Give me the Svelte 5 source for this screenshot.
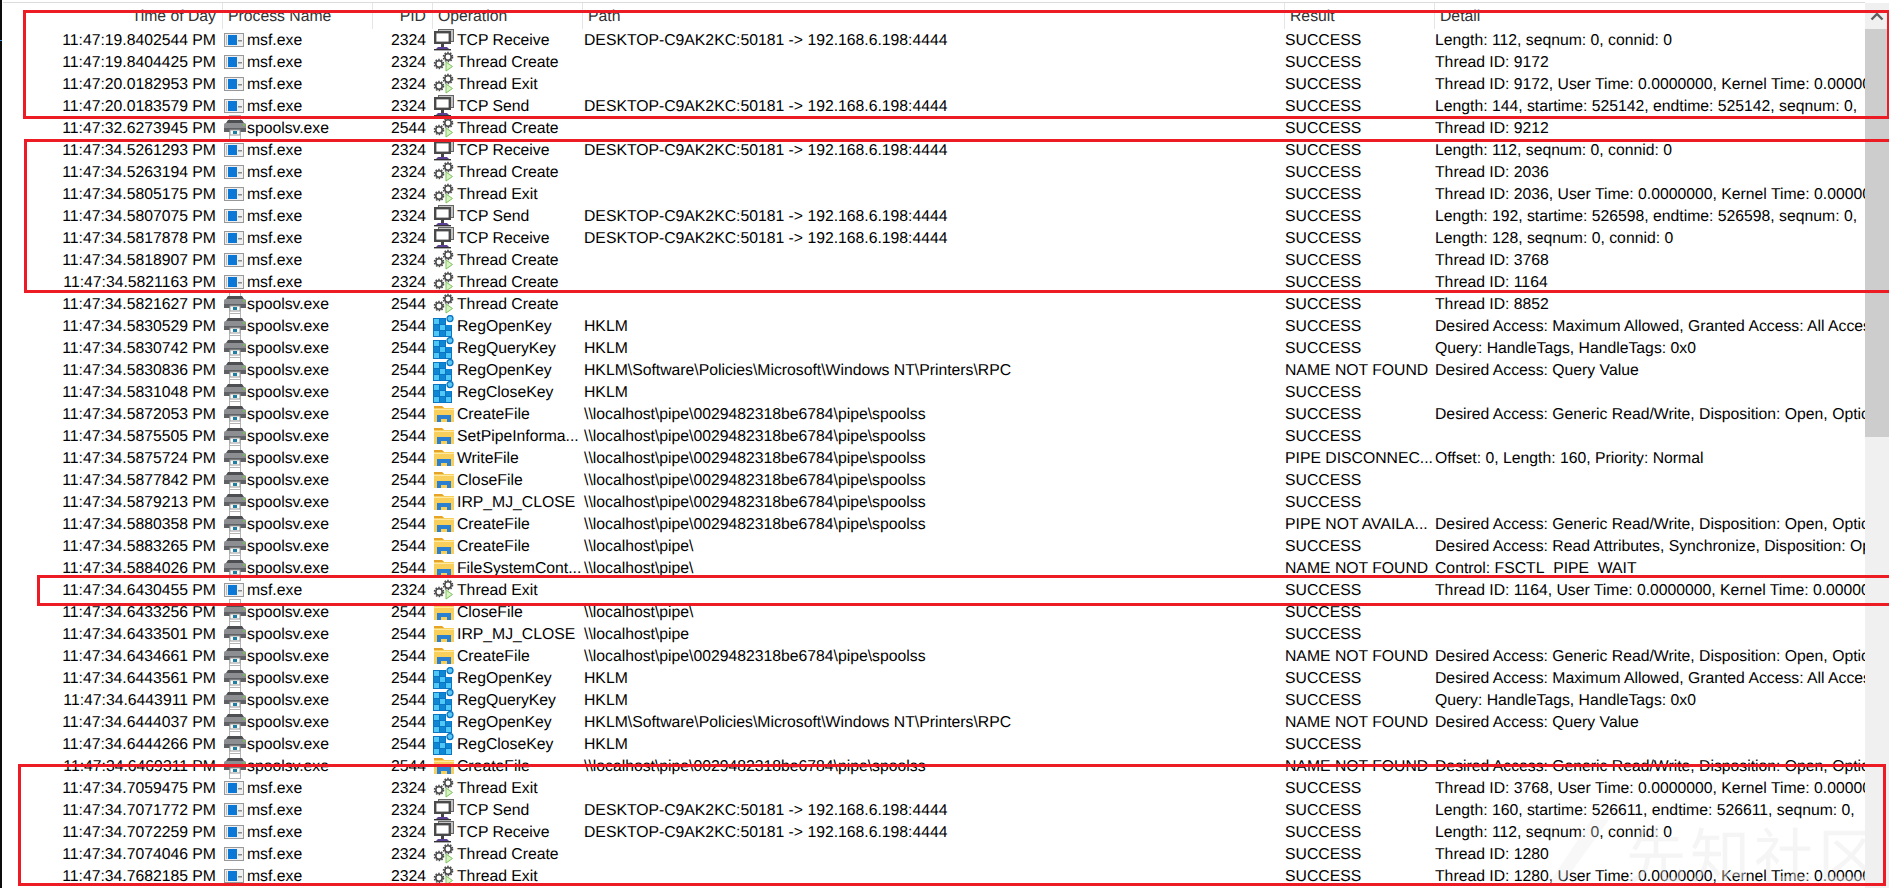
<script>
  const columns = [
    { label: 'Time of Day', cls: 'time' },
    { label: 'Process Name', cls: 'proc' },
    { label: 'PID', cls: 'pid' },
    { label: 'Operation', cls: 'op' },
    { label: 'Path', cls: 'path' },
    { label: 'Result', cls: 'res' },
    { label: 'Detail', cls: 'det' }
  ];

  const TCP = 'DESKTOP-C9AK2KC:50181 -> 192.168.6.198:4444';
  const PIPE = '\\\\localhost\\pipe\\0029482318be6784\\pipe\\spoolss';
  const POLICY = 'HKLM\\Software\\Policies\\Microsoft\\Windows NT\\Printers\\RPC';
  const OK = 'SUCCESS';
  const NF = 'NAME NOT FOUND';
  const kernel = (id) => `Thread ID: ${id}, User Time: 0.0000000, Kernel Time: 0.0000000`;
  const open = 'Desired Access: Generic Read/Write, Disposition: Open, Options: Write Through';

  // time, proc, operation, path, result, detail
  const rows = [
    ['19.8402544', 'm', 'TCP Receive', TCP, OK, 'Length: 112, seqnum: 0, connid: 0'],
    ['19.8404425', 'm', 'Thread Create', '', OK, 'Thread ID: 9172'],
    ['20.0182953', 'm', 'Thread Exit', '', OK, kernel(9172)],
    ['20.0183579', 'm', 'TCP Send', TCP, OK, 'Length: 144, startime: 525142, endtime: 525142, seqnum: 0,'],
    ['32.6273945', 's', 'Thread Create', '', OK, 'Thread ID: 9212'],
    ['34.5261293', 'm', 'TCP Receive', TCP, OK, 'Length: 112, seqnum: 0, connid: 0'],
    ['34.5263194', 'm', 'Thread Create', '', OK, 'Thread ID: 2036'],
    ['34.5805175', 'm', 'Thread Exit', '', OK, kernel(2036)],
    ['34.5807075', 'm', 'TCP Send', TCP, OK, 'Length: 192, startime: 526598, endtime: 526598, seqnum: 0,'],
    ['34.5817878', 'm', 'TCP Receive', TCP, OK, 'Length: 128, seqnum: 0, connid: 0'],
    ['34.5818907', 'm', 'Thread Create', '', OK, 'Thread ID: 3768'],
    ['34.5821163', 'm', 'Thread Create', '', OK, 'Thread ID: 1164'],
    ['34.5821627', 's', 'Thread Create', '', OK, 'Thread ID: 8852'],
    ['34.5830529', 's', 'RegOpenKey', 'HKLM', OK, 'Desired Access: Maximum Allowed, Granted Access: All Access'],
    ['34.5830742', 's', 'RegQueryKey', 'HKLM', OK, 'Query: HandleTags, HandleTags: 0x0'],
    ['34.5830836', 's', 'RegOpenKey', POLICY, NF, 'Desired Access: Query Value'],
    ['34.5831048', 's', 'RegCloseKey', 'HKLM', OK, ''],
    ['34.5872053', 's', 'CreateFile', PIPE, OK, open],
    ['34.5875505', 's', 'SetPipeInforma...', PIPE, OK, ''],
    ['34.5875724', 's', 'WriteFile', PIPE, 'PIPE DISCONNEC...', 'Offset: 0, Length: 160, Priority: Normal'],
    ['34.5877842', 's', 'CloseFile', PIPE, OK, ''],
    ['34.5879213', 's', 'IRP_MJ_CLOSE', PIPE, OK, ''],
    ['34.5880358', 's', 'CreateFile', PIPE, 'PIPE NOT AVAILA...', open],
    ['34.5883265', 's', 'CreateFile', '\\\\localhost\\pipe\\', OK, 'Desired Access: Read Attributes, Synchronize, Disposition: Open'],
    ['34.5884026', 's', 'FileSystemCont...', '\\\\localhost\\pipe\\', NF, 'Control: FSCTL_PIPE_WAIT'],
    ['34.6430455', 'm', 'Thread Exit', '', OK, kernel(1164)],
    ['34.6433256', 's', 'CloseFile', '\\\\localhost\\pipe\\', OK, ''],
    ['34.6433501', 's', 'IRP_MJ_CLOSE', '\\\\localhost\\pipe', OK, ''],
    ['34.6434661', 's', 'CreateFile', PIPE, NF, open],
    ['34.6443561', 's', 'RegOpenKey', 'HKLM', OK, 'Desired Access: Maximum Allowed, Granted Access: All Access'],
    ['34.6443911', 's', 'RegQueryKey', 'HKLM', OK, 'Query: HandleTags, HandleTags: 0x0'],
    ['34.6444037', 's', 'RegOpenKey', POLICY, NF, 'Desired Access: Query Value'],
    ['34.6444266', 's', 'RegCloseKey', 'HKLM', OK, ''],
    ['34.6469311', 's', 'CreateFile', PIPE, NF, open],
    ['34.7059475', 'm', 'Thread Exit', '', OK, kernel(3768)],
    ['34.7071772', 'm', 'TCP Send', TCP, OK, 'Length: 160, startime: 526611, endtime: 526611, seqnum: 0,'],
    ['34.7072259', 'm', 'TCP Receive', TCP, OK, 'Length: 112, seqnum: 0, connid: 0'],
    ['34.7074046', 'm', 'Thread Create', '', OK, 'Thread ID: 1280'],
    ['34.7682185', 'm', 'Thread Exit', '', OK, kernel(1280)]
  ];

  function opKind(op) {
    if (op.startsWith('TCP')) return 'net';
    if (op.startsWith('Thread')) return 'thread';
    if (op.startsWith('Reg')) return 'reg';
    return 'file';
  }

  // x, y, dark
  const regCells = [
    [1, 4, 0], [7, 4, 1], [1, 10, 1], [7, 10, 0], [13, 10, 1], [1, 16, 0], [7, 16, 1], [13, 16, 0]
  ];
</script>

{#snippet msfIcon()}
  <svg class="ico" width="20" height="14" viewBox="0 0 20 14">
    <rect x="0.5" y="0.5" width="19" height="13" fill="#f0f0f0" stroke="#989898" />
    <path d="M2 3h1M2 5h1M2 7h1M2 9h1M2 11h1" stroke="#8a8a8a" />
    <rect x="4" y="2" width="9" height="10" fill="#0b78d8" />
    <rect x="14" y="7" width="4" height="1.5" fill="#8a8a8a" />
  </svg>
{/snippet}

{#snippet printerIcon()}
  <svg class="ico over" width="24" height="26" viewBox="0 0 24 26">
    <rect x="6.5" y="0.5" width="11" height="7" fill="#fff" stroke="#b4b4b4" />
    <rect x="6.5" y="17.5" width="11" height="8" fill="#fff" stroke="#b4b4b4" />
    <path d="M5 5h14l2 3H3z" fill="#4d4f52" />
    <rect x="1" y="8" width="22" height="7" rx="1.5" fill="#8c8e91" />
    <rect x="1" y="13" width="22" height="4" fill="#5f6164" />
    <rect x="20" y="9" width="2" height="2" fill="#6fc24a" />
    <rect x="7" y="15" width="10" height="5" fill="#fff" stroke="#9a9a9a" />
    <rect x="10" y="16" width="4" height="3" fill="#1b7fa8" />
  </svg>
{/snippet}

{#snippet netIcon()}
  <svg class="ico over" width="22" height="22" viewBox="0 0 22 22">
    <rect x="5.5" y="0.5" width="15" height="12" fill="#c4c4c4" stroke="#666" />
    <rect x="2.2" y="3.2" width="14.6" height="10.6" fill="#fff" stroke="#4a4a4a" stroke-width="2.4" />
    <rect x="8" y="15" width="3" height="3" fill="#444" />
    <path d="M5 18h9l2 2H3z" fill="#5b3f94" />
    <rect x="1" y="20" width="17" height="1.4" fill="#333" />
  </svg>
{/snippet}

{#snippet threadIcon()}
  <svg class="ico over" width="22" height="22" viewBox="0 0 22 22">
    <circle cx="15" cy="6" r="3.2" fill="#fff" stroke="#4a4a4a" stroke-width="1.6" />
    <circle cx="15" cy="6" r="4.6" fill="none" stroke="#4a4a4a" stroke-width="1.4" stroke-dasharray="1.6 1.3" />
    <circle cx="6" cy="13" r="3.2" fill="#fff" stroke="#4a4a4a" stroke-width="1.6" />
    <circle cx="6" cy="13" r="4.6" fill="none" stroke="#4a4a4a" stroke-width="1.4" stroke-dasharray="1.6 1.3" />
    <path d="M13 11l6.5 4.5L13 20z" fill="#d8f2c4" stroke="#7cc35a" />
  </svg>
{/snippet}

{#snippet regIcon()}
  <svg class="ico over" width="22" height="22" viewBox="0 0 22 22">
    <rect x="0" y="3" width="19" height="19" fill="#0a75c2" />
    {#each regCells as [x, y, dark]}
      <rect {x} {y} width="5" height="5" fill={dark ? '#0e86d4' : '#4fc8f8'} />
    {/each}
    <rect x="13" y="3" width="6" height="7" fill="#fff" />
    <circle cx="17" cy="3.6" r="3" fill="#5ac8f5" stroke="#0a75c2" stroke-width="1.3" />
  </svg>
{/snippet}

{#snippet fileIcon()}
  <svg class="ico over" width="22" height="20" viewBox="0 0 22 20">
    <path d="M1 3h8l2 2h10v14H1z" fill="#f9cf5c" />
    <path d="M1 3h8l2 2H1z" fill="#e5a428" />
    <rect x="1" y="6" width="20" height="1" fill="#fde9a4" />
    <path d="M4 19v-7h14v7h-4v-3H8v3z" fill="#2b7fd1" />
  </svg>
{/snippet}

<div class="page">
  <div class="strip"><span class="tick"></span></div>

  <main class="table">
    <div class="head">
      {#each columns as c}
        <div class="hcell {c.cls}">{c.label}</div>
      {/each}
    </div>

    {#each rows as r}
      <div class="row">
        <div class="cell time">11:47:{r[0]} PM</div>
        <div class="cell proc">
          {#if r[1] === 'm'}
            <span class="slot">{@render msfIcon()}</span>msf.exe
          {:else}
            <span class="slot">{@render printerIcon()}</span>spoolsv.exe
          {/if}
        </div>
        <div class="cell pid">{r[1] === 'm' ? '2324' : '2544'}</div>
        <div class="cell op">
          <span class="slot">
            {#if opKind(r[2]) === 'net'}
              {@render netIcon()}
            {:else if opKind(r[2]) === 'thread'}
              {@render threadIcon()}
            {:else if opKind(r[2]) === 'reg'}
              {@render regIcon()}
            {:else}
              {@render fileIcon()}
            {/if}
          </span>{r[2]}
        </div>
        <div class="cell path">{r[3]}</div>
        <div class="cell res">{r[4]}</div>
        <div class="cell det">{r[5]}</div>
      </div>
    {/each}

    <div class="mark" aria-hidden="true">
      <svg width="62" height="66" viewBox="0 0 62 66"><path d="M44 0h18L14 66H0z" fill="rgba(232, 232, 232, 0.3)" /></svg>
      <span>先知社区</span>
    </div>
  </main>

  <aside class="scroll">
    <div class="arrow">
      <svg width="14" height="9" viewBox="0 0 14 9"><path d="M1.5 7.5L7 2l5.5 5.5" fill="none" stroke="#5f5f5f" stroke-width="2.4" /></svg>
    </div>
    <div class="thumb"></div>
  </aside>

  <div class="mark-box one"></div>
  <div class="mark-box two"></div>
  <div class="mark-box three"></div>
  <div class="mark-box four"></div>
</div>

<style>
  :global(body) {
    margin: 0;
    background: #fff;
  }

  .page {
    position: relative;
    display: flex;
    width: 1889px;
    height: 888px;
    overflow: hidden;
    background: #fff;
    color: #000;
    font-family: "Liberation Sans", Arial, sans-serif;
    font-size: 15.75px;
    text-rendering: geometricPrecision; /* keep fractional advances */
  }

  .strip {
    position: relative;
    flex: 0 0 2px;
    background: #0c0c0c;
  }

  .tick {
    position: absolute;
    top: 40px;
    left: 0;
    width: 2px;
    height: 1px;
    background: #3f8fd8;
  }

  .table {
    position: relative;
    flex: 1;
    min-width: 0;
    overflow: hidden;
    --cols: 220px 150px 60px 150px 702px 150px 1fr;
  }

  .head {
    display: grid;
    grid-template-columns: var(--cols);
    height: 26px;
    margin-top: 2px;
    margin-left: 1px;
    border-top: 1px solid #dcdcdc;
    box-sizing: content-box;
  }

  .hcell {
    padding: 0 6px;
    line-height: 28px;
    color: #333;
    border-right: 1px solid #e5e5e5;
    margin-left: -1px;
    white-space: nowrap;
    overflow: hidden;
  }

  .hcell.time,
  .hcell.pid {
    text-align: right;
  }

  .hcell.det {
    border-right: none;
  }

  .row {
    display: grid;
    grid-template-columns: var(--cols);
    height: 22px;
    line-height: 24px;
  }

  .cell {
    display: flex;
    align-items: flex-start;
    white-space: nowrap;
    overflow: hidden;
    min-width: 0;
  }

  .time,
  .pid {
    justify-content: flex-end;
    padding-right: 6px;
  }

  .cell.proc,
  .cell.op {
    overflow: visible;
  }

  .cell.path {
    padding-left: 2px;
  }

  .cell.res,
  .cell.det {
    padding-left: 1px;
  }

  .proc .slot {
    margin-left: 2px;
    width: 23px;
  }

  .op .slot {
    margin-left: 1px;
    width: 24px;
  }

  .slot {
    position: relative;
    display: inline-block;
    flex: none;
    height: 22px;
  }

  .ico {
    position: absolute;
    left: 0;
    top: 4px;
    display: block;
  }

  .ico.over {
    top: 0;
  }

  .proc .ico.over {
    top: -2px;
    left: -1px;
  }

  .mark {
    position: absolute;
    left: 1545px;
    top: 818px;
    display: flex;
    align-items: center;
    gap: 17px;
    white-space: nowrap;
    font-family: "Noto Sans CJK SC", sans-serif;
    font-size: 60px;
    line-height: 70px;
    letter-spacing: 4px;
    color: rgba(232, 232, 232, 0.45);
  }

  .scroll {
    flex: 0 0 24px;
    margin-top: 3px;
    background: #f0f0f0;
    display: flex;
    flex-direction: column;
  }

  .arrow {
    height: 26px;
    display: flex;
    align-items: center;
    justify-content: center;
  }

  .thumb {
    height: 408px;
    background: #cdcdcd;
  }

  .mark-box {
    position: absolute;
    border: 3px solid #ed1c24;
    box-sizing: border-box;
    pointer-events: none;
  }

  .one {
    left: 23px;
    top: 10px;
    width: 1866px;
    height: 109px;
    border-right-width: 2px;
  }

  .two {
    left: 24px;
    top: 139px;
    width: 1880px;
    height: 154px;
  }

  .three {
    left: 37px;
    top: 575px;
    width: 1880px;
    height: 31px;
  }

  .four {
    left: 18px;
    top: 764px;
    width: 1868px;
    height: 122px;
  }
</style>
